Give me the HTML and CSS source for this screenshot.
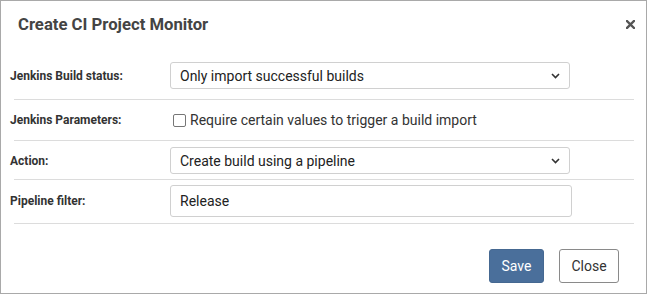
FILE: index.html
```html
<!DOCTYPE html>
<html lang="en">
<head>
  <meta charset="UTF-8">
  <title>Create CI Project Monitor</title>
  <link rel="stylesheet" href="styles.css">
</head>
<body>
<div class="modal">
  <div class="modal-header">
    <h1>Create CI Project Monitor</h1>
    <button class="close-x" aria-label="Close">
      <svg width="9" height="9" viewBox="0 0 9 9"><path d="M1 1 L8 8 M8 1 L1 8" stroke="#555" stroke-width="2.4" stroke-linecap="square"/></svg>
    </button>
  </div>

  <div class="modal-body">
    <div class="form-row row-first">
      <label>Jenkins Build status:</label>
      <div class="select">
        <span>Only import successful builds</span>
        <svg width="9" height="6" viewBox="0 0 9 6"><path d="M1 1 L4.5 4.5 L8 1" fill="none" stroke="#333" stroke-width="1.6"/></svg>
      </div>
    </div>

    <div class="form-row row-check">
      <label>Jenkins Parameters:</label>
      <div class="check">
        <span class="box"></span>
        <span>Require certain values to trigger a build import</span>
      </div>
    </div>

    <div class="form-row row-mid">
      <label>Action:</label>
      <div class="select">
        <span>Create build using a pipeline</span>
        <svg width="9" height="6" viewBox="0 0 9 6"><path d="M1 1 L4.5 4.5 L8 1" fill="none" stroke="#333" stroke-width="1.6"/></svg>
      </div>
    </div>

    <div class="form-row row-last">
      <label>Pipeline filter:</label>
      <input type="text" class="text-input" value="Release">
    </div>
  </div>

  <div class="modal-footer">
    <button class="btn btn-save">Save</button>
    <button class="btn btn-close">Close</button>
  </div>
</div>
</body>
</html>
```

FILE: styles.css
```css
body {
  margin: 0;
  padding: 0;
  font-family: Roboto, "Open Sans", sans-serif;
  color: #333;
  background: #ffffff;
}

.modal {
  width: 647px;
  height: 294px;
  box-sizing: border-box;
  border: 1px solid #a9a9a9;
  background: #ffffff;
  display: flex;
  flex-direction: column;
}

.modal-header {
  height: 51px;
  display: flex;
  align-items: center;
  justify-content: space-between;
  padding: 0 11px 4px 17px;
  box-sizing: border-box;
}

.modal-header h1 {
  margin: 0;
  font-size: 16.7px;
  font-weight: 700;
  color: #444;
}

.close-x {
  background: none;
  border: none;
  padding: 0;
  display: flex;
  cursor: pointer;
}

.modal-body {
  padding: 0 12px 0 13px;
}

.form-row {
  display: flex;
  align-items: center;
  border-bottom: 1px solid #dcdcdc;
}

.form-row label {
  width: 160px;
  margin-left: -4px;
  font-size: 12px;
  font-weight: 700;
  color: #333;
}

.row-first {
  padding: 10px 0;
}

.row-check {
  height: 40px;
}

.row-mid {
  padding: 6px 0 5px;
}

.row-last {
  padding: 5px 0 6px;
}

.select {
  width: 400px;
  height: 27px;
  box-sizing: border-box;
  border: 1px solid #d0d0d0;
  border-radius: 3px;
  display: flex;
  align-items: center;
  justify-content: space-between;
  padding: 0 9px 0 9px;
  font-size: 14px;
  color: #222;
}

.check {
  display: flex;
  align-items: center;
  gap: 4px;
  margin-left: 3px;
  font-size: 14px;
  color: #333;
}

.check .box {
  width: 11px;
  height: 11px;
  border: 1px solid #767676;
  border-radius: 2px;
}

.text-input {
  width: 402px;
  height: 32px;
  box-sizing: border-box;
  border: 1px solid #d0d0d0;
  border-radius: 3px;
  padding: 0 9px;
  font-family: inherit;
  font-size: 14px;
  color: #222;
  margin: 0;
}

.modal-footer {
  display: flex;
  justify-content: flex-end;
  gap: 15px;
  padding: 25px 27px 0 0;
}

.btn {
  height: 34px;
  border-radius: 3px;
  font-family: inherit;
  font-size: 14px;
  cursor: pointer;
}

.btn-save {
  width: 55px;
  background-color: #4a6f9b;
  border: 1px solid #456891;
  color: #ffffff;
}

.btn-close {
  width: 60px;
  background-color: #ffffff;
  border: 1px solid #8a8a8a;
  color: #333;
}
```
